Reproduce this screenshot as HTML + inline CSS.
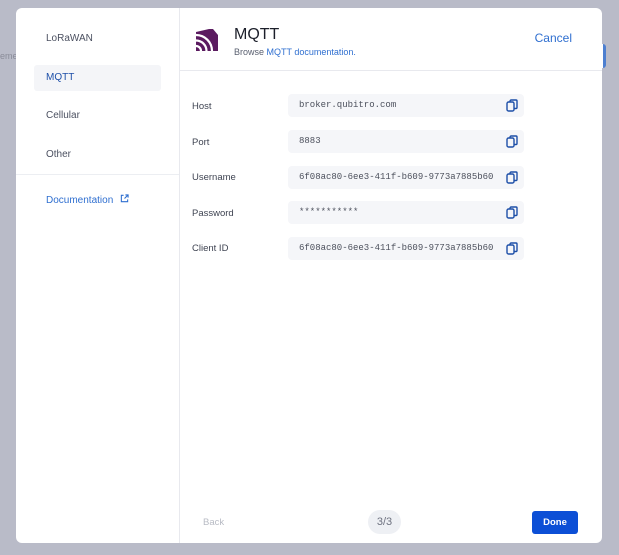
<!DOCTYPE html>
<html><head><style>
body{margin:0;width:619px;height:555px;background:#b9bbc8;font-family:"Liberation Sans",sans-serif;position:relative;overflow:hidden}
.bg{position:absolute;left:0;top:51px;font-size:9px;color:#8a8c99}
.behind{position:absolute;left:560px;top:44px;width:43px;height:24px;background:#fff;border-right:3px solid #4d7fd0;border-radius:3px}
.modal{position:absolute;left:16px;top:8px;width:586px;height:535px;background:#fff;border-radius:6px;overflow:hidden}
.side{position:absolute;left:0;top:0;width:163px;height:535px;border-right:1px solid #e8e9ee}
.item{position:absolute;left:18px;width:127px;height:26px;line-height:26px;font-size:10px;color:#4b5060;padding-left:12px;box-sizing:border-box;border-radius:3px}
.act{background:#f4f5f8;color:#1d4fa8}
.sep{position:absolute;left:0;top:166px;width:163px;border-top:1px solid #eceef2}
.doc{position:absolute;left:30px;top:186px;font-size:10px;color:#2f6fd0}
.head{position:absolute;left:164px;top:0;width:422px;height:62px;border-bottom:1px solid #e8e9ee}
.title{position:absolute;left:54px;top:18px;font-size:16px;color:#1c1f2a}
.sub{position:absolute;left:54px;top:39px;font-size:9px;color:#5a6070}
.sub span{color:#2f6fd0}
.cancel{position:absolute;right:30px;top:23px;font-size:12px;color:#2f6fd0}
.lab{position:absolute;left:192px;font-size:9.5px;color:#3f4452}
.fld{position:absolute;left:288px;width:236px;height:23px;background:#f5f6f9;border-radius:4px;font-family:"Liberation Mono",monospace;font-size:9px;color:#4c505c;line-height:23px;padding-left:11px;box-sizing:border-box}
.fld svg{position:absolute;right:6px;top:5px}
.back{position:absolute;left:203px;top:517px;font-size:9.5px;color:#b8bbc4}
.pg{position:absolute;left:368px;top:510px;width:33px;height:24px;border-radius:12px;background:#eef0f4;color:#6e7280;font-size:11px;text-align:center;line-height:24px}
.done{position:absolute;left:532px;top:511px;width:46px;height:23px;background:#0c4fd6;border-radius:3px;color:#fff;font-size:9.5px;font-weight:bold;text-align:center;line-height:23px}
</style></head><body>
<div class="bg">eme</div>
<div class="behind"></div>
<div class="modal">
<div class="side">
<div class="item" style="top:18px">LoRaWAN</div>
<div class="item act" style="top:57px">MQTT</div>
<div class="item" style="top:95px">Cellular</div>
<div class="item" style="top:134px">Other</div>
<div class="sep"></div>
<div class="doc">Documentation <svg width="9" height="9" viewBox="0 0 10 10" style="margin-left:4px"><path d="M4 1.5H1.5v7h7V6M6 1h3v3M9 1L5 5" fill="none" stroke="#2f6fd0" stroke-width="1.2"/></svg></div>
</div>
<div class="head">
<svg style="position:absolute;left:16px;top:21px" width="22" height="22" viewBox="0 0 22 22"><rect width="22" height="22" fill="#5b1b60"/><g fill="none" stroke="#fff" stroke-width="2.2"><path d="M0 6A16 16 0 0 1 16 22"/><path d="M0 11.5A10.5 10.5 0 0 1 10.5 22"/><path d="M0 17A5 5 0 0 1 5 22"/></g><path d="M0 0H13L0 3Z M17 0H22V6Z" fill="#fff"/></svg>
<div class="title">MQTT</div>
<div class="sub">Browse <span>MQTT documentation.</span></div>
<div class="cancel">Cancel</div>
</div>
</div>
<div class="lab" style="top:101px">Host</div>
<div class="lab" style="top:137px">Port</div>
<div class="lab" style="top:172px">Username</div>
<div class="lab" style="top:208px">Password</div>
<div class="lab" style="top:243px">Client ID</div>
<div class="fld" style="top:94px">broker.qubitro.com<svg width="12" height="13" viewBox="0 0 12 13"><rect x="1" y="3" width="7" height="9" rx="1.5" fill="none" stroke="#1d4fa8" stroke-width="1.4"/><path d="M4 3V2.2A1.2 1.2 0 0 1 5.2 1H10A1 1 0 0 1 11 2V8.5A1 1 0 0 1 10 9.5H8" fill="none" stroke="#1d4fa8" stroke-width="1.4"/></svg></div>
<div class="fld" style="top:130px">8883<svg width="12" height="13" viewBox="0 0 12 13"><rect x="1" y="3" width="7" height="9" rx="1.5" fill="none" stroke="#1d4fa8" stroke-width="1.4"/><path d="M4 3V2.2A1.2 1.2 0 0 1 5.2 1H10A1 1 0 0 1 11 2V8.5A1 1 0 0 1 10 9.5H8" fill="none" stroke="#1d4fa8" stroke-width="1.4"/></svg></div>
<div class="fld" style="top:166px">6f08ac80-6ee3-411f-b609-9773a7885b60<svg width="12" height="13" viewBox="0 0 12 13"><rect x="1" y="3" width="7" height="9" rx="1.5" fill="none" stroke="#1d4fa8" stroke-width="1.4"/><path d="M4 3V2.2A1.2 1.2 0 0 1 5.2 1H10A1 1 0 0 1 11 2V8.5A1 1 0 0 1 10 9.5H8" fill="none" stroke="#1d4fa8" stroke-width="1.4"/></svg></div>
<div class="fld" style="top:201px">***********<svg width="12" height="13" viewBox="0 0 12 13"><rect x="1" y="3" width="7" height="9" rx="1.5" fill="none" stroke="#1d4fa8" stroke-width="1.4"/><path d="M4 3V2.2A1.2 1.2 0 0 1 5.2 1H10A1 1 0 0 1 11 2V8.5A1 1 0 0 1 10 9.5H8" fill="none" stroke="#1d4fa8" stroke-width="1.4"/></svg></div>
<div class="fld" style="top:237px">6f08ac80-6ee3-411f-b609-9773a7885b60<svg width="12" height="13" viewBox="0 0 12 13"><rect x="1" y="3" width="7" height="9" rx="1.5" fill="none" stroke="#1d4fa8" stroke-width="1.4"/><path d="M4 3V2.2A1.2 1.2 0 0 1 5.2 1H10A1 1 0 0 1 11 2V8.5A1 1 0 0 1 10 9.5H8" fill="none" stroke="#1d4fa8" stroke-width="1.4"/></svg></div>
<div class="back">Back</div>
<div class="pg">3/3</div>
<div class="done">Done</div>
</body></html>
